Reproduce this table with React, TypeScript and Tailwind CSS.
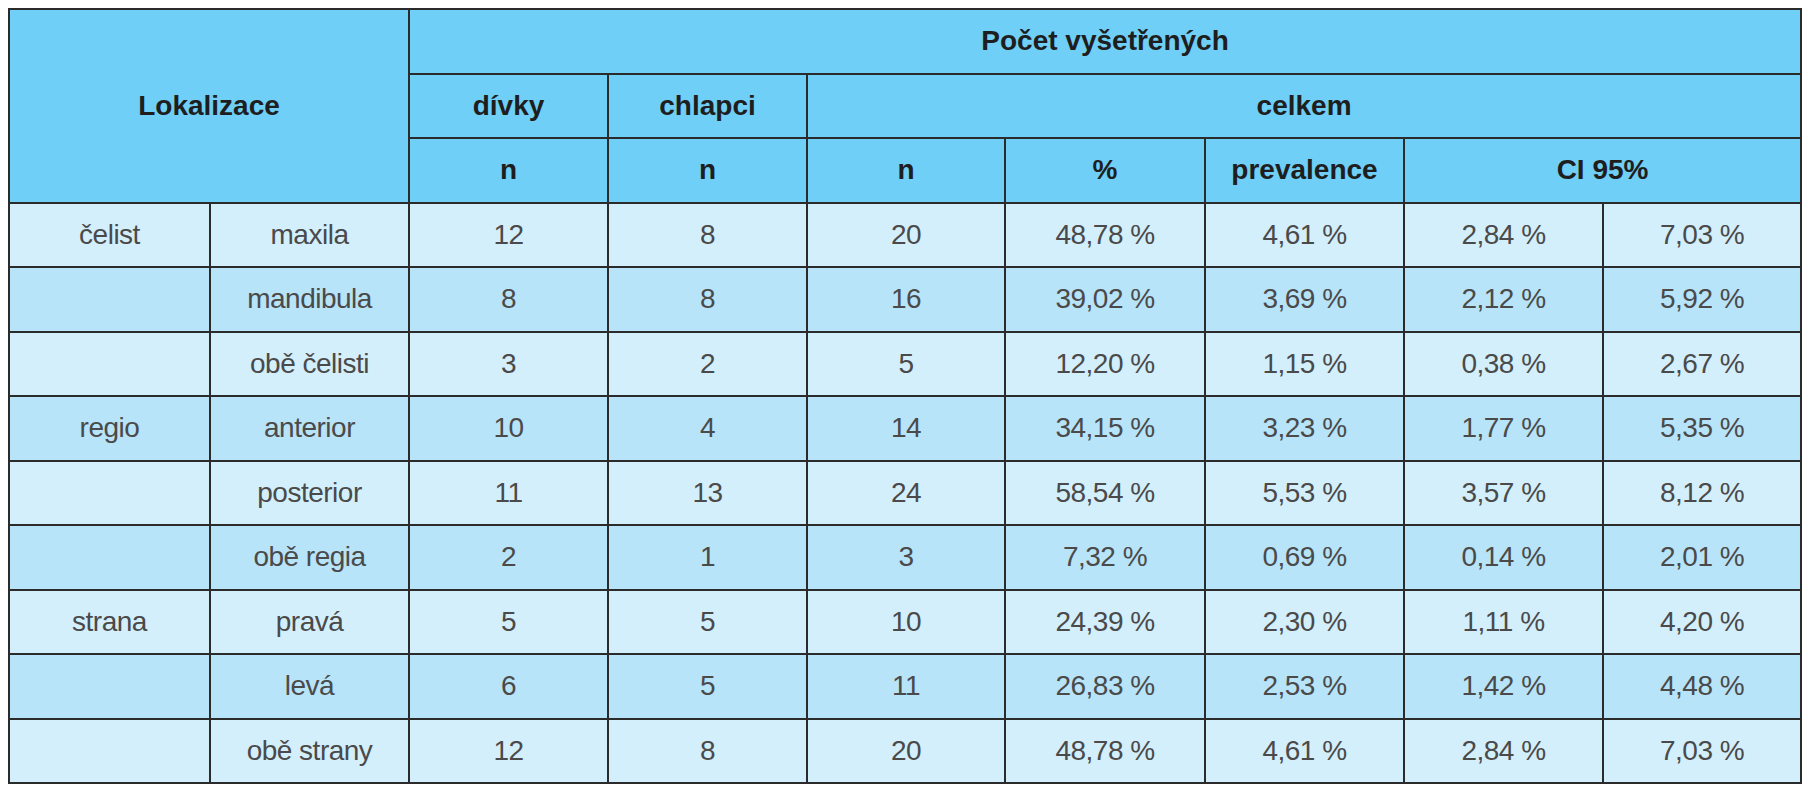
const ROWS: [string, string, string, string, string, string, string, string, string][] = [
  ["čelist", "maxila", "12", "8", "20", "48,78 %", "4,61 %", "2,84 %", "7,03 %"],
  ["", "mandibula", "8", "8", "16", "39,02 %", "3,69 %", "2,12 %", "5,92 %"],
  ["", "obě čelisti", "3", "2", "5", "12,20 %", "1,15 %", "0,38 %", "2,67 %"],
  ["regio", "anterior", "10", "4", "14", "34,15 %", "3,23 %", "1,77 %", "5,35 %"],
  ["", "posterior", "11", "13", "24", "58,54 %", "5,53 %", "3,57 %", "8,12 %"],
  ["", "obě regia", "2", "1", "3", "7,32 %", "0,69 %", "0,14 %", "2,01 %"],
  ["strana", "pravá", "5", "5", "10", "24,39 %", "2,30 %", "1,11 %", "4,20 %"],
  ["", "levá", "6", "5", "11", "26,83 %", "2,53 %", "1,42 %", "4,48 %"],
  ["", "obě strany", "12", "8", "20", "48,78 %", "4,61 %", "2,84 %", "7,03 %"],
];

const WIDTHS = ["w-[201px]", "w-[199px]", "w-[199px]", "w-[199px]", "w-[198px]", "w-[200px]", "w-[199px]", "w-[199px]", "w-[198px]"];

const th = "border-2 border-[#2b2b2b] bg-[#6fcff6] text-center align-middle font-bold text-[#1e1e1e]";
const td = "border-2 border-[#2b2b2b] text-center align-middle font-normal text-[#4a4a4a] tracking-[-0.5px]";

export default function App() {
  return (
    <div className="min-h-screen bg-white pl-2 pt-2" style={{ fontFamily: '"Liberation Sans", Arial, sans-serif' }}>
      <table className="table-fixed border-collapse text-[28px] leading-none w-[1792px]">
        <colgroup>
          {WIDTHS.map((w, i) => (
            <col key={i} className={w} />
          ))}
        </colgroup>
        <thead>
          <tr className="h-[64.5px]">
            <th rowSpan={3} colSpan={2} className={th}>
              Lokalizace
            </th>
            <th colSpan={7} className={th}>
              Počet vyšetřených
            </th>
          </tr>
          <tr className="h-[64.5px]">
            <th className={th}>dívky</th>
            <th className={th}>chlapci</th>
            <th colSpan={5} className={th}>
              celkem
            </th>
          </tr>
          <tr className="h-[64.5px]">
            <th className={th}>n</th>
            <th className={th}>n</th>
            <th className={th}>n</th>
            <th className={th}>%</th>
            <th className={th}>prevalence</th>
            <th colSpan={2} className={th}>
              CI 95%
            </th>
          </tr>
        </thead>
        <tbody>
          {ROWS.map((row, r) => (
            <tr key={r} className={`h-[64.5px] ${r % 2 === 0 ? "bg-[#d4effc]" : "bg-[#b8e4f9]"}`}>
              {row.map((cell, c) => (
                <td key={c} className={td}>
                  {cell}
                </td>
              ))}
            </tr>
          ))}
        </tbody>
      </table>
    </div>
  );
}
